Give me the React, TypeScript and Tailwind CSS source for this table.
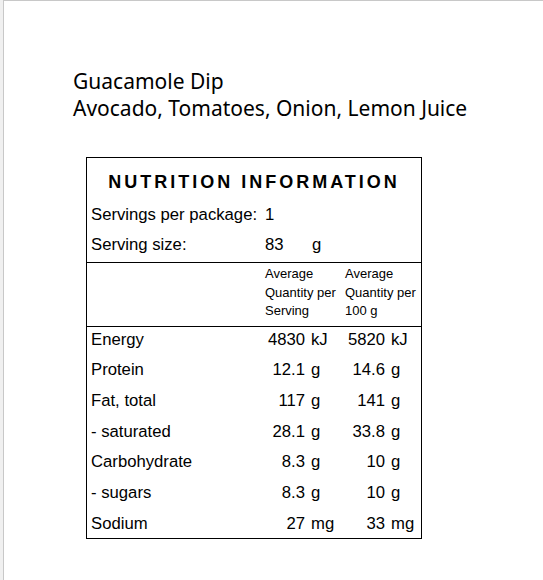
import React from 'react';

const rows = [
  { name: 'Energy', serving: '4830', per100: '5820', unit: 'kJ' },
  { name: 'Protein', serving: '12.1', per100: '14.6', unit: 'g' },
  { name: 'Fat, total', serving: '117', per100: '141', unit: 'g' },
  { name: '- saturated', serving: '28.1', per100: '33.8', unit: 'g' },
  { name: 'Carbohydrate', serving: '8.3', per100: '10', unit: 'g' },
  { name: '- sugars', serving: '8.3', per100: '10', unit: 'g' },
  { name: 'Sodium', serving: '27', per100: '33', unit: 'mg' },
];

function Amount({ value, unit }: { value: string; unit: string }) {
  return (
    <div className="flex">
      <span className="w-[40px] text-right">{value}</span>
      <span className="ml-[6px]">{unit}</span>
    </div>
  );
}

export default function App() {
  return (
    <div className="h-[580px] w-full bg-white border-l-[3px] border-l-[#f0f0f0]">
      <div className="h-full border-l border-t border-[#c8c8c8] pl-[69px] pt-[67px] text-black">
        {/* Product heading */}
        <div className="text-[21px] leading-[27px] [font-family:'Noto_Sans',sans-serif]">
          <div>Guacamole Dip</div>
          <div>Avocado, Tomatoes, Onion, Lemon Juice</div>
        </div>

        {/* Nutrition panel */}
        <div className="mt-[35px] ml-[13px] w-[336px] border border-black text-[16.7px] [font-family:'Liberation_Sans',Arial,sans-serif]">
          <div className="h-[104px] px-[4px]">
            <div className="pt-[8px] text-center text-[18px] font-bold leading-[33px] tracking-[3px]">
              NUTRITION INFORMATION
            </div>
            <div className="grid h-[30.5px] grid-cols-[174px_80px_75px] items-center">
              <span>Servings per package:</span>
              <span>1</span>
            </div>
            <div className="grid h-[30.5px] grid-cols-[174px_80px_75px] items-center">
              <span>Serving size:</span>
              <div className="flex">
                <span className="w-[40px]">83</span>
                <span className="ml-[7px]">g</span>
              </div>
            </div>
          </div>

          <div className="grid h-[65px] grid-cols-[174px_80px_75px] border-y border-black px-[4px] pt-[2px] text-[13px] leading-[18.5px]">
            <span />
            <div>
              Average
              <br />
              Quantity per
              <br />
              Serving
            </div>
            <div>
              Average
              <br />
              Quantity per
              <br />
              100 g
            </div>
          </div>

          <div className="h-[214px] px-[4px]">
            <div className="-mt-[3px]">
              {rows.map((r) => (
                <div key={r.name} className="grid h-[30.67px] grid-cols-[174px_80px_75px] items-center">
                  <span>{r.name}</span>
                  <Amount value={r.serving} unit={r.unit} />
                  <Amount value={r.per100} unit={r.unit} />
                </div>
              ))}
            </div>
          </div>
        </div>
      </div>
    </div>
  );
}
